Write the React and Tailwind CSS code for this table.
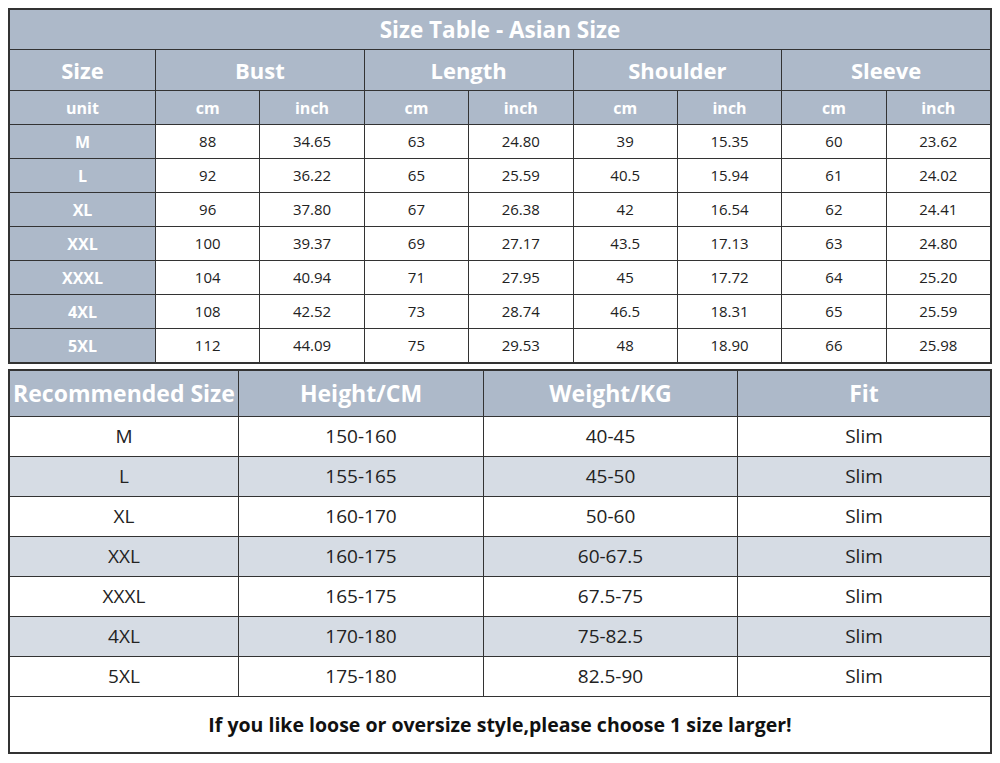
import React from "react";

const sizes = [
  ["M", "88", "34.65", "63", "24.80", "39", "15.35", "60", "23.62"],
  ["L", "92", "36.22", "65", "25.59", "40.5", "15.94", "61", "24.02"],
  ["XL", "96", "37.80", "67", "26.38", "42", "16.54", "62", "24.41"],
  ["XXL", "100", "39.37", "69", "27.17", "43.5", "17.13", "63", "24.80"],
  ["XXXL", "104", "40.94", "71", "27.95", "45", "17.72", "64", "25.20"],
  ["4XL", "108", "42.52", "73", "28.74", "46.5", "18.31", "65", "25.59"],
  ["5XL", "112", "44.09", "75", "29.53", "48", "18.90", "66", "25.98"],
];

const recommended = [
  ["M", "150-160", "40-45", "Slim"],
  ["L", "155-165", "45-50", "Slim"],
  ["XL", "160-170", "50-60", "Slim"],
  ["XXL", "160-175", "60-67.5", "Slim"],
  ["XXXL", "165-175", "67.5-75", "Slim"],
  ["4XL", "170-180", "75-82.5", "Slim"],
  ["5XL", "175-180", "82.5-90", "Slim"],
];

const head = "bg-[#adb9c9] text-white font-bold flex items-center justify-center";
const cell = "bg-white text-[#222] flex items-center justify-center";

const App = () => {
  return (
    <div className="w-[1000px] h-[763px] bg-white px-2 pt-2 font-['Open_Sans',sans-serif]">
      <div className="grid grid-cols-[145px_repeat(8,minmax(0,1fr))] grid-rows-[39px_40px_33px_repeat(7,33px)] gap-px bg-[#333] border-2 border-[#333]">
        <div className={`${head} col-span-9 text-[22.5px]`}>Size Table - Asian Size</div>
        <div className={`${head} text-[22px]`}>Size</div>
        {["Bust", "Length", "Shoulder", "Sleeve"].map((h) => (
          <div key={h} className={`${head} col-span-2 text-[22px]`}>
            {h}
          </div>
        ))}
        <div className={`${head} text-[16px]`}>unit</div>
        {[0, 1, 2, 3].map((i) => (
          <React.Fragment key={i}>
            <div className={`${head} text-[16px]`}>cm</div>
            <div className={`${head} text-[16px]`}>inch</div>
          </React.Fragment>
        ))}
        {sizes.map((row) =>
          row.map((v, j) => (
            <div
              key={row[0] + j}
              className={j === 0 ? `${head} text-[16px]` : `${cell} text-[15px]`}
            >
              {v}
            </div>
          ))
        )}
      </div>

      <div className="mt-[5px] grid grid-cols-[228px_244px_253px_minmax(0,1fr)] grid-rows-[45px_repeat(7,39px)_55px] gap-px bg-[#333] border-2 border-[#333]">
        {["Recommended Size", "Height/CM", "Weight/KG", "Fit"].map((h) => (
          <div key={h} className={`${head} text-[23px] whitespace-nowrap`}>
            {h}
          </div>
        ))}
        {recommended.map((row, i) =>
          row.map((v, j) => (
            <div
              key={row[0] + j}
              className={`${i % 2 === 1 ? "bg-[#d6dce4]" : "bg-white"} text-[#222] text-[19px] flex items-center justify-center`}
            >
              {v}
            </div>
          ))
        )}
        <div className="col-span-4 bg-white text-[#111] text-[19.5px] font-bold flex items-center justify-center">
          If you like loose or oversize style,please choose 1 size larger!
        </div>
      </div>
    </div>
  );
};

export default App;
